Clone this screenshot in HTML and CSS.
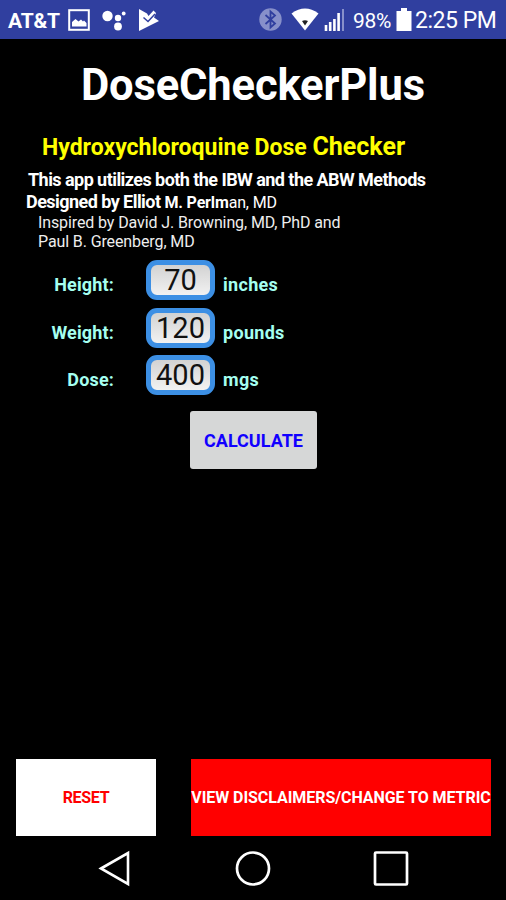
FILE: index.html
```html
<!DOCTYPE html>
<html lang="en">
<head>
    <meta charset="UTF-8">
    <meta name="viewport" content="width=device-width, initial-scale=1.0">
    <title>DoseCheckerPlus</title>
    <link rel="stylesheet" href="styles.css">
</head>
<body>
    <div id="status-bar">
        <span class="carrier">AT&amp;T</span>
        <svg class="picture" width="22" height="22" viewBox="0 0 22 22">
            <rect x="1.2" y="1.2" width="19.6" height="19.6" fill="none" stroke="#fff" stroke-width="2"/>
            <path d="M4 17.500V13l3.500-3 3 2.500 2.500-2 2 2 1-1 2.500 2.500v3.500z" fill="#fff"/>
        </svg>
        <svg class="dots" width="24" height="22" viewBox="0 0 24 22">
            <g fill="#fff">
                <circle cx="5.500" cy="7" r="5.200"/>
                <circle cx="16" cy="9" r="3.200"/>
                <circle cx="16" cy="17.500" r="3.900"/>
                <circle cx="21.700" cy="4.500" r="1.900"/>
            </g>
        </svg>
        <svg class="check" width="22" height="22" viewBox="0 0 22 22">
            <path d="M1 0l8 4.500 1.500 2.500 5-5.500 2.500 2.500-2 4.500 5 3.500L1 22z" fill="#fff"/>
            <path d="M5.500 8.500l4.500 4 7-7.500" fill="none" stroke="#303f9f" stroke-width="1.500"/>
        </svg>
        <svg class="bluetooth" width="23" height="23" viewBox="0 0 23 23">
            <circle cx="11.500" cy="11.500" r="11.200" fill="#8790ca"/>
            <path d="M6.500 7l9.500 8.500-4.500 4v-16l4.500 4L6.500 16" fill="none" stroke="#303f9f" stroke-width="1.800"/>
        </svg>
        <svg class="wifi" width="28" height="23" viewBox="0 0 28 23">
            <path d="M.5 5.500Q14-4.500 27.500 5.500L14 22.500z" fill="#fff"/>
            <path d="M11 13q3-1.500 6 0l-3 4.500z" fill="#222"/>
        </svg>
        <svg class="signal" width="21" height="23" viewBox="0 0 21 23">
            <path d="M2 23v-6M6.200 23v-9M10.400 23v-12M14.600 23V5" stroke="#fff" stroke-width="2.600"/>
            <path d="M19 23V1" stroke="#8790ca" stroke-width="2"/>
        </svg>
        <span class="percent">98%</span>
        <svg class="battery" width="16" height="23" viewBox="0 0 16 23">
            <path d="M5 0h6v3h4.500v20H.5V3H5z" fill="#fff"/>
        </svg>
        <span class="clock">2:25 PM</span>
    </div>

    <div id="content">
        <h1>DoseCheckerPlus</h1>
        <h2>Hydroxychloroquine Dose <span>Checker</span></h2>
        <p class="methods">This app utilizes both the IBW and the ABW Methods</p>
        <p class="designer"><b>Designed by Elliot</b> <b class="small">M. Perlm</b><span class="small">an, MD</span></p>
        <p class="inspired">Inspired by David J. Browning, MD, PhD and<br>Paul B. Greenberg, MD</p>

        <div class="fields">
            <label for="height">Height:</label>
            <input id="height" type="text" value="70">
            <span>inches</span>
            <label for="weight">Weight:</label>
            <input id="weight" type="text" value="120">
            <span>pounds</span>
            <label for="dose">Dose:</label>
            <input id="dose" type="text" value="400">
            <span>mgs</span>
        </div>

        <button id="calculate">CALCULATE</button>
    </div>

    <div class="button-container">
        <button id="reset">RESET</button>
        <button id="metric">VIEW DISCLAIMERS/CHANGE TO METRIC</button>
    </div>

    <div id="nav-bar">
        <svg width="36" height="40" viewBox="0 0 36 40">
            <path d="M4 20.500L31 5v31z" fill="none" stroke="#fff" stroke-width="2.600"/>
        </svg>
        <svg width="36" height="40" viewBox="0 0 36 40">
            <circle cx="18" cy="20.500" r="16" fill="none" stroke="#fff" stroke-width="2.700"/>
        </svg>
        <svg width="36" height="40" viewBox="0 0 36 40">
            <rect x="2" y="4.500" width="32" height="32" rx="1" fill="none" stroke="#fff" stroke-width="2.700"/>
        </svg>
    </div>
</body>
</html>
```
FILE: styles.css
```css
body {
    font-family: Roboto, sans-serif;
    background-color: #000000;
    color: white;
    margin: 0;
    height: 900px;
    overflow: hidden;
    display: flex;
    flex-direction: column;
}
h1, h2, p {
    margin: 0;
    white-space: nowrap;
}
#status-bar {
    display: flex;
    align-items: center;
    height: 39px;
    box-sizing: border-box;
    padding-left: 8px;
    background-color: #303f9f;
    white-space: nowrap;
}
#status-bar svg {
    flex: none;
}
.carrier {
    width: 60px;
    font-size: 21px;
    font-weight: bold;
    letter-spacing: -0.2px;
    padding-top: 2px;
}
.dots {
    margin-left: 12px;
}
.check {
    margin-left: 12px;
}
.bluetooth {
    margin-left: 99px;
}
.wifi {
    margin-left: 9px;
}
.signal {
    margin-left: 5px;
}
.percent {
    width: 42px;
    margin-left: 8px;
    padding-top: 2px;
    font-size: 21px;
    letter-spacing: -0.3px;
}
.battery {
    margin-left: 1px;
}
.clock {
    margin-left: 3px;
    padding-top: 2px;
    font-size: 23px;
    letter-spacing: -0.45px;
}
#content {
    flex: 1;
}
h1 {
    margin-top: 22px;
    padding-left: 81px;
    font-size: 43.500px;
    line-height: 50px;
    letter-spacing: -0.15px;
}
h2 {
    margin-top: 21px;
    padding-left: 42px;
    font-size: 23px;
    line-height: 30px;
    color: #ffff00;
}
h2 span {
    font-size: 25px;
}
.methods {
    margin-top: 6px;
    padding-left: 28px;
    font-size: 18px;
    font-weight: bold;
    line-height: 22px;
    letter-spacing: -0.55px;
}
.designer {
    padding-left: 26px;
    font-size: 18px;
    line-height: 22px;
    letter-spacing: -0.55px;
}
.small {
    font-size: 16px;
    letter-spacing: -0.15px;
}
.inspired {
    margin-top: -1px;
    padding-left: 38px;
    font-size: 16px;
    line-height: 19px;
    letter-spacing: -0.11px;
    color: #eee;
}
.fields {
    display: grid;
    grid-template-columns: 114px 69px auto;
    column-gap: 32px;
    row-gap: 7.500px;
    margin-top: 9px;
    font-size: 18px;
    font-weight: bold;
    line-height: 49px;
    color: #a5fff0;
}
.fields label {
    height: 40px;
    text-align: right;
    letter-spacing: 0.15px;
}
.fields input {
    width: 69px;
    height: 40px;
    box-sizing: border-box;
    padding: 0;
    border: 5px solid #3c8fe4;
    border-radius: 11px;
    background: linear-gradient(#d2d2d2, #f2f2f2);
    color: #111;
    font-family: Roboto, sans-serif;
    font-size: 29px;
    text-align: center;
}
.fields span {
    height: 40px;
    margin-left: -24px;
    letter-spacing: 0.3px;
}
button {
    padding: 0;
    border: none;
    font-family: Roboto, sans-serif;
    font-weight: bold;
    white-space: nowrap;
}
#calculate {
    display: block;
    width: 127px;
    height: 58px;
    margin: 16px 0 0 190px;
    border-radius: 3px;
    background-color: #d6d7d7;
    color: #1100ff;
    font-size: 18px;
}
.button-container {
    display: flex;
    justify-content: space-between;
    padding: 0 15px 0 16px;
    height: 77px;
}
#reset {
    width: 140px;
    background-color: #fff;
    color: #ff0000;
    font-size: 16px;
    letter-spacing: -0.3px;
}
#metric {
    width: 300px;
    background-color: #ff0000;
    color: #fff;
    font-size: 16px;
    letter-spacing: -0.06px;
}
#nav-bar {
    display: flex;
    justify-content: center;
    gap: 102px;
    height: 52px;
    padding-top: 12px;
}
```
